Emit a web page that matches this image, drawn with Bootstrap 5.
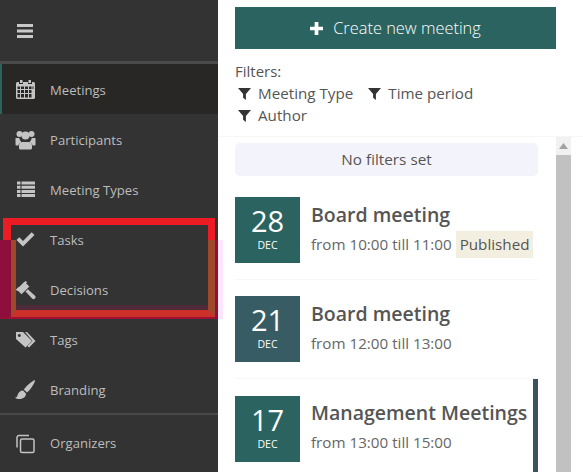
<!DOCTYPE html>
<html lang="en">
<head>
<meta charset="utf-8">
<title>Meetings</title>
<link href="https://cdn.jsdelivr.net/npm/bootstrap@5.3.0/dist/css/bootstrap.min.css" rel="stylesheet">
<style>
html,body{height:100%;margin:0;overflow:hidden}
body{font-family:"Open Sans","Noto Sans",sans-serif;background:#fff;color:#555}
.app-shell{width:583px;height:472px;position:relative}
.side-panel{width:218px;flex:none;background:#333;color:#bdbdbd}
.side-top{height:64px;border-bottom:3px solid #4a4a4a;padding-left:17px}
.side-link{height:50px;font-size:13.1px;color:#bdbdbd;text-decoration:none;padding:4px 0 0 15px;gap:14px}
.side-link:hover{color:#bdbdbd}
.side-link svg{width:21px;height:21px;fill:#c4c4c4;flex:none;margin-top:-4px}
.side-link.is-current{background:#282726;border-left:2px solid #2a6360;padding-left:13px}
.side-sep{height:2px;background:#4a4a4a;margin-top:-1px}
.org-link{height:56px;padding-top:2px}
.org-link svg{margin-top:-2px}
.organizer-icon{fill:none!important;stroke:#c4c4c4;stroke-width:1.5}
.main-pane{width:365px;flex:none}
.head-zone{padding:7px 0 0 17px;height:137px;border-bottom:1px solid #f6f6f6}
.create-btn{width:321px;height:42px;background:#2a6360;border:0;border-radius:0;color:#fff;font-size:16.4px;gap:10px;font-weight:300}
.create-btn:hover{background:#2a6360;color:#fff}
.filter-label{font-size:15px;line-height:22px;color:#555;margin-top:11px}
.filter-row{width:300px;font-size:15.2px;line-height:22px;color:#555;column-gap:15px;padding-left:3px}
.filter-row svg{width:13px;height:13px;fill:#333;margin-right:7px;vertical-align:-1px}
.list-zone{height:335px;overflow:hidden}
.list-col{width:338px;flex:none;padding:6px 0 0 17px}
.no-filter{width:303px;height:33px;background:#f3f4fb;border-radius:5px;font-size:15.3px;color:#555;margin-bottom:21px}
.meet-row{width:303px;gap:11px;border-bottom:1px solid #f7f7f7;position:relative}
.first-run{height:83px}
.second-run{height:99px;padding-top:16px}
.mark-run{height:99px;padding-top:17px;border-bottom:0}
.mark-run::after{content:"";position:absolute;right:0;top:0;bottom:0;width:5px;background:#3b5160}
.date-tile{width:65px;height:66px;background:#2a6360;color:#fff;flex:none;line-height:1}
.date-tile.dark-tile{background:#375c63}
.date-num{font-size:29px;margin-top:9px;line-height:30px}
.date-mon{font-size:10.5px;line-height:12px;margin-top:3px}
.meet-text{margin-top:5px}
.mark-run .meet-text{margin-top:4px}
.meet-title{font-size:19.5px;font-weight:600;color:#555;line-height:26px;white-space:nowrap}
.meet-time{font-size:15.2px;color:#666;line-height:27px;margin-top:3px;white-space:nowrap}
.pub-tag{background:#f3efe0;color:#555;padding:0 4px;display:inline-block}
.fake-bar{width:15px;flex:none;background:#f1f1f1;height:335px}
.fake-up{height:18px}
.fake-up svg{width:9px;height:6px;fill:#a3a3a3}
.fake-thumb{height:317px;background:#c1c1c1}
.red-upper{position:absolute;left:3px;top:218px;width:212px;height:22px;border:solid #ed1c24;border-width:7px 7px 0 8px;pointer-events:none}
.red-lower{position:absolute;left:0;top:240px;width:218px;height:79px;border:solid #8e0f3c;border-width:0 3px 2px 11px;border-bottom-color:#a01035;pointer-events:none}
.red-mid{height:100%;border:solid #a0482a;border-width:0 7px 7px 5px;border-bottom-color:#cc3028}
.red-inner{height:100%;border-bottom:5px solid #4f2a38}
.pink-edge{position:absolute;left:218px;top:240px;width:5px;height:79px;background:#fde6fb;pointer-events:none}
</style>
</head>
<body>
<div class="app-shell d-flex">
  <nav class="side-panel d-flex flex-column">
    <div class="side-top d-flex align-items-center">
      <svg width="16" height="14" viewBox="0 0 16 14" fill="#c8c8c8" aria-hidden="true"><rect y="0" width="16" height="3"/><rect y="5.5" width="16" height="3"/><rect y="11" width="16" height="3"/></svg>
    </div>
    <a class="side-link is-current d-flex align-items-center" href="#">
      <svg viewBox="0 0 21 21"><path fill-rule="evenodd" d="M5 1h2.500v3H5zM13.500 1H16v3h-2.500zM2.500 3H4v2h4V3h5v2h4V3h1.500A1.500 1.500 0 0 1 20 4.500v14a1.500 1.500 0 0 1-1.500 1.500h-16A1.500 1.500 0 0 1 1 18.500v-14A1.500 1.500 0 0 1 2.500 3zM2.500 7.500V10H5V7.500zM6 7.500V10h3V7.500zM10 7.500V10h3V7.500zM14 7.500V10h2.500V7.500zM17.500 7.500V10h1V7.500zM2.500 11v3H5v-3zM6 11v3h3v-3zM10 11v3h3v-3zM14 11v3h2.500v-3zM2.500 15v3.500H5V15zM6 15v3.500h3V15zM10 15v3.500h3V15zM14 15v3.500h2.500V15z"/></svg>
      <span>Meetings</span>
    </a>
    <a class="side-link d-flex align-items-center" href="#">
      <svg viewBox="0 0 21 21"><circle cx="4.500" cy="5" r="3"/><circle cx="16.500" cy="5" r="3"/><circle cx="10.500" cy="6.500" r="4"/><path d="M.5 9h3.800a6 6 0 0 0 2 4c-1.700.7-2.800 2-2.800 3.500H1.500A1 1 0 0 1 .5 15.500zM16.700 9h3.800v6.500a1 1 0 0 1-1 1h-2c0-1.500-1.100-2.800-2.800-3.500a6 6 0 0 0 2-4zM7 13h7c2.200.2 3 2 3 3.800v2.200c0 1-.8 1.500-1.800 1.500H5.800C4.800 20.500 4 20 4 19v-2.200C4 15 4.800 13.200 7 13z"/></svg>
      <span>Participants</span>
    </a>
    <a class="side-link d-flex align-items-center" href="#">
      <svg viewBox="0 0 21 21"><path d="M2 2.500h3.500v3H2zM6.500 2.500H20v3H6.500zM2 6.700h3.500v3H2zM6.500 6.700H20v3H6.500zM2 10.900h3.500v3H2zM6.500 10.900H20v3H6.500zM2 15.100h3.500v3H2zM6.500 15.100H20v3H6.500z"/></svg>
      <span>Meeting Types</span>
    </a>
    <a class="side-link d-flex align-items-center" href="#">
      <svg viewBox="0 0 21 21"><path d="M8 17.500 1.500 11l2.800-2.800L8 11.900 16.700 3.200 19.500 6z"/></svg>
      <span>Tasks</span>
    </a>
    <a class="side-link d-flex align-items-center" href="#">
      <svg viewBox="0 0 21 21"><rect x="2.500" y="5.500" width="11" height="7" transform="rotate(-45 8 9)"/><rect x="1" y="9" width="4" height="2" rx=".5" transform="rotate(-45 3 10)"/><rect x="8" y="3" width="4" height="2" rx=".5" transform="rotate(-45 10 4)"/><path d="M10.500 12.500 12.800 10.200 20 16.800a1.900 1.900 0 0 1-2.900 2.600z"/></svg>
      <span>Decisions</span>
    </a>
    <a class="side-link d-flex align-items-center" href="#">
      <svg viewBox="0 0 21 21"><path fill-rule="evenodd" d="M1 3h7l9 9-6.500 6.500L1 10zM4.300 5a1.500 1.500 0 1 0 .01 0z"/><path d="M10 3h2l8.500 9-6.500 6.500-1.600-1.500 5.100-5z"/></svg>
      <span>Tags</span>
    </a>
    <a class="side-link d-flex align-items-center" href="#">
      <svg viewBox="0 0 21 21"><path d="M19.500 1c.8.400.5 1.500-.2 2.700-1.600 3.300-4.300 7.500-7.300 9.800L8.800 10.500C11.500 7 16.500 2.500 19.500 1zM8 11.500l3 3c0 3-2.500 5.500-6.500 5.500C2.500 20 1 19.500 0 18.500c2 0 2.200-1.200 2.800-3C3.500 13.300 5.500 11.500 8 11.500z"/></svg>
      <span>Branding</span>
    </a>
    <div class="side-sep"></div>
    <a class="side-link org-link d-flex align-items-center" href="#">
      <svg class="organizer-icon" viewBox="0 0 21 21"><path d="M14 2.500H4A2 2 0 0 0 2 4.500v10"/><rect x="5.500" y="6" width="13.500" height="13.500" rx="1.500"/></svg>
      <span>Organizers</span>
    </a>
  </nav>
  <main class="main-pane">
    <div class="head-zone">
      <button class="btn create-btn d-flex align-items-center justify-content-center" type="button">
        <svg width="13" height="13" viewBox="0 0 14 14" fill="#fff" aria-hidden="true"><path d="M5 0h4v5h5v4H9v5H5V9H0V5h5z"/></svg>
        <span>Create new meeting</span>
      </button>
      <div class="filter-label">Filters:</div>
      <div class="filter-row d-flex flex-wrap">
        <span><svg viewBox="0 0 14 14"><path d="M0 1h14L8.500 7.500V14L5.500 11.500v-4z"/></svg>Meeting Type</span>
        <span><svg viewBox="0 0 14 14"><path d="M0 1h14L8.500 7.500V14L5.500 11.500v-4z"/></svg>Time period</span>
        <span><svg viewBox="0 0 14 14"><path d="M0 1h14L8.500 7.500V14L5.500 11.500v-4z"/></svg>Author</span>
      </div>
    </div>
    <div class="list-zone d-flex">
      <div class="list-col">
        <div class="no-filter d-flex align-items-center justify-content-center">No filters set</div>
        <div class="meet-row first-run d-flex align-items-start">
          <div class="date-tile d-flex flex-column align-items-center"><div class="date-num">28</div><div class="date-mon">DEC</div></div>
          <div class="meet-text"><div class="meet-title">Board meeting</div><div class="meet-time">from 10:00 till 11:00 <span class="pub-tag">Published</span></div></div>
        </div>
        <div class="meet-row second-run d-flex align-items-start">
          <div class="date-tile dark-tile d-flex flex-column align-items-center"><div class="date-num">21</div><div class="date-mon">DEC</div></div>
          <div class="meet-text"><div class="meet-title">Board meeting</div><div class="meet-time">from 12:00 till 13:00</div></div>
        </div>
        <div class="meet-row mark-run d-flex align-items-start">
          <div class="date-tile d-flex flex-column align-items-center"><div class="date-num">17</div><div class="date-mon">DEC</div></div>
          <div class="meet-text"><div class="meet-title">Management Meetings</div><div class="meet-time">from 13:00 till 15:00</div></div>
        </div>
      </div>
      <div class="fake-bar d-flex flex-column">
        <div class="fake-up d-flex align-items-center justify-content-center"><svg viewBox="0 0 9 6"><path d="M4.500 0 9 6H0z"/></svg></div>
        <div class="fake-thumb"></div>
      </div>
    </div>
  </main>
  <div class="pink-edge"></div>
  <div class="red-upper"></div>
  <div class="red-lower"><div class="red-mid"><div class="red-inner"></div></div></div>
</div>
<script src="https://cdn.jsdelivr.net/npm/bootstrap@5.3.0/dist/js/bootstrap.bundle.min.js"></script>
</body>
</html>
